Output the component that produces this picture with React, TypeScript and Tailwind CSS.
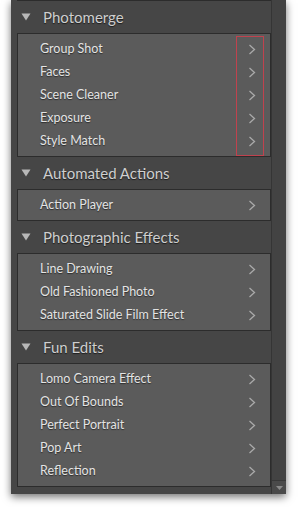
import React from "react";

const sections: { title: string; items: string[] }[] = [
  { title: "Photomerge", items: ["Group Shot", "Faces", "Scene Cleaner", "Exposure", "Style Match"] },
  { title: "Automated Actions", items: ["Action Player"] },
  { title: "Photographic Effects", items: ["Line Drawing", "Old Fashioned Photo", "Saturated Slide Film Effect"] },
  { title: "Fun Edits", items: ["Lomo Camera Effect", "Out Of Bounds", "Perfect Portrait", "Pop Art", "Reflection"] },
];

function Chevron() {
  return (
    <svg width="8" height="11" viewBox="0 0 8 11" className="shrink-0">
      <path d="M1.5 1 L6.5 5.5 L1.5 10" fill="none" stroke="#a9a9a9" strokeWidth="1.3" />
    </svg>
  );
}

function Triangle() {
  return (
    <svg width="10" height="8" viewBox="0 0 10 8" className="shrink-0">
      <path d="M0.5 0.5 L9.5 0.5 L5 7.5 Z" fill="#b8b8b8" />
    </svg>
  );
}

export default function App() {
  return (
    <div className="w-[298px] h-[507px] bg-white overflow-hidden" style={{ fontFamily: "Lato, 'Open Sans', sans-serif" }}>
      <div className="ml-[11px] w-[275px] h-[494px] bg-[#464646] flex shadow-[0_3px_8px_rgba(0,0,0,0.55)]">
        <div className="w-[260px] flex flex-col pl-[6px]">
          <div className="h-[1px] border-b border-x border-[#2c2c2c] bg-[#5b5b5b]" />
          {sections.map((s, si) => (
            <div key={s.title} className="flex flex-col">
              <div className="h-[32px] flex items-center pl-[4px] gap-[12px]">
                <Triangle />
                <span className="text-[15px] text-[#cfcfcf] [text-shadow:0_1px_1px_rgba(0,0,0,0.6)]">{s.title}</span>
              </div>
              <div className="relative border border-[#2c2c2c] bg-[#5b5b5b] pt-[4px] pb-[3px]">
                {s.items.map((it) => (
                  <div key={it} className="h-[23px] flex items-center justify-between pl-[22px] pr-[14px]">
                    <span className="text-[12.5px] text-[#e4e4e4] [text-shadow:0_1px_1px_rgba(0,0,0,0.5)]">{it}</span>
                    <Chevron />
                  </div>
                ))}
                {si === 0 && (
                  <div className="absolute left-[218px] top-[2px] w-[28px] h-[120px] border border-[#c0424e]" />
                )}
              </div>
            </div>
          ))}
        </div>
        <div className="w-[15px] border-l border-[#353535] bg-[#434343] flex flex-col justify-end">
          <div className="h-[14px] flex items-center justify-center border-t border-[#383838] bg-[#4a4a4a]">
            <svg width="7" height="4" viewBox="0 0 7 4"><path d="M0 0 L7 0 L3.5 4 Z" fill="#8a8a8a" /></svg>
          </div>
        </div>
      </div>
    </div>
  );
}
